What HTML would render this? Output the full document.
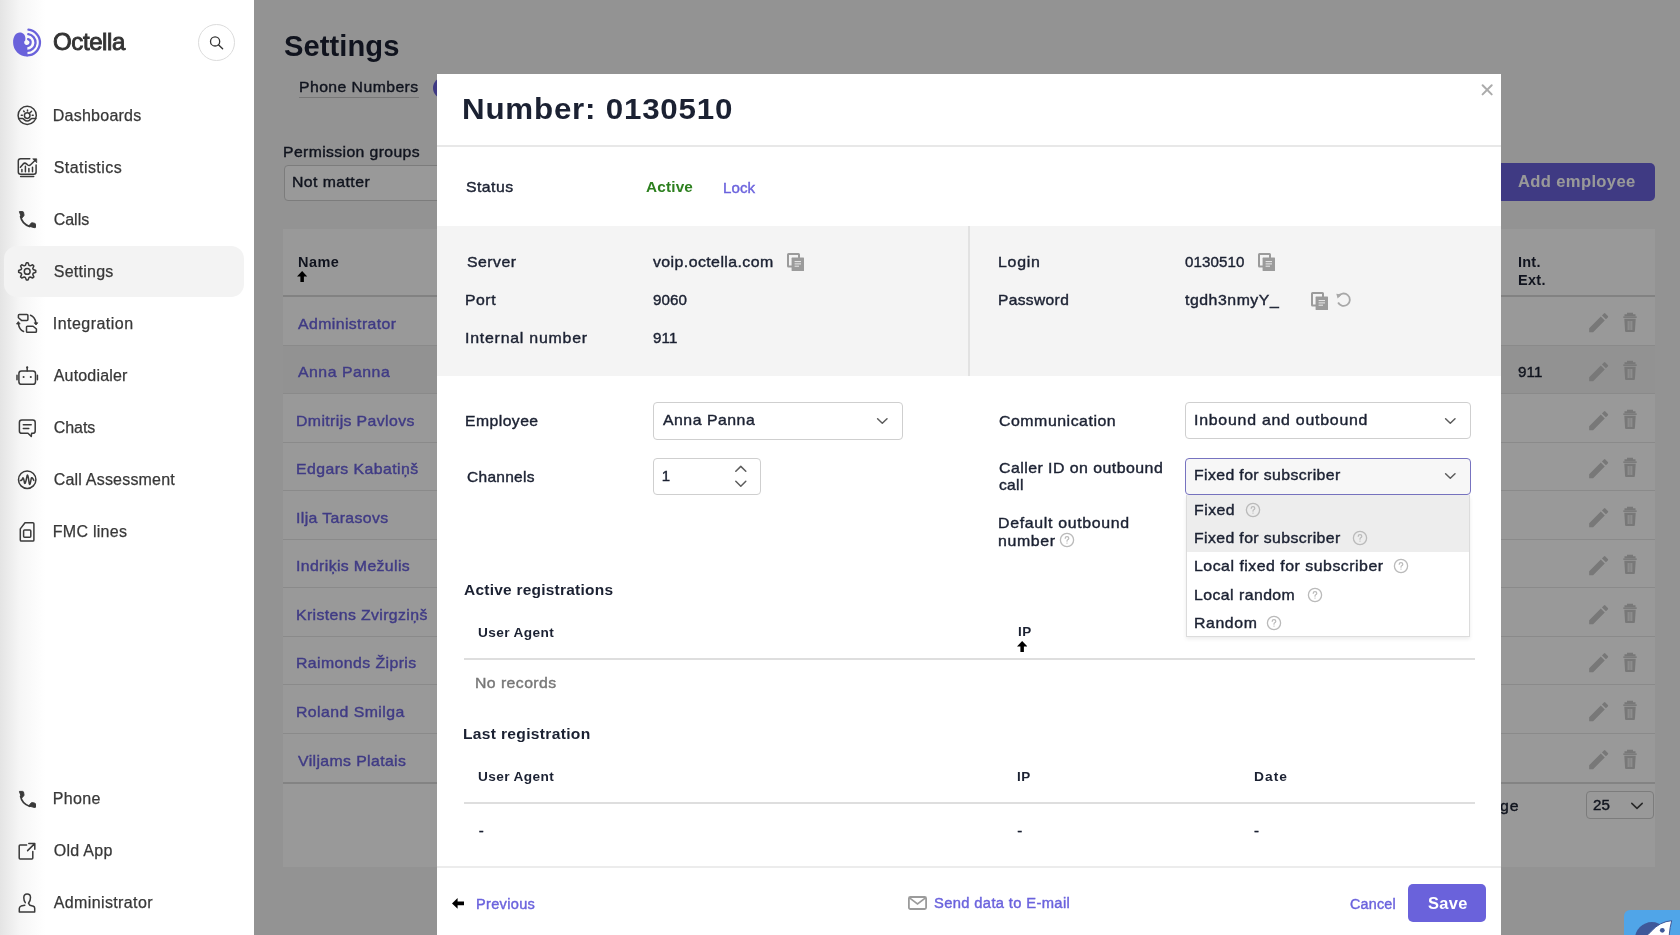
<!DOCTYPE html>
<html><head><meta charset="utf-8">
<style>
html,body{margin:0;padding:0;width:1680px;height:935px;overflow:hidden;background:#f5f5f5;font-family:"Liberation Sans",sans-serif;}
.t{position:absolute;white-space:nowrap;}
.b{position:absolute;box-sizing:border-box;display:block;}
.layer{position:absolute;left:0;top:0;width:1680px;height:935px;overflow:hidden;will-change:transform;}
</style></head><body>
<div class="layer" style="background:#f5f5f5"><div class="b" style="left:299px;top:97px;width:119.5px;height:1px;background:#c6c6c6"></div>
<div class="b" style="left:433px;top:77px;width:22px;height:22px;border-radius:50%;background:#6a62db"></div>
<div class="b" style="left:283.6px;top:164.9px;width:320px;height:36.5px;border:1px solid #cfcfcf;border-radius:4px;background:#fff"></div>
<div class="b" style="left:1480px;top:162.8px;width:174.5px;height:38px;border-radius:5px;background:#6a62db"></div>
<div class="b" style="left:282.7px;top:229.3px;width:1372.6px;height:638.1px;background:#fff"></div>
<div class="b" style="left:282.7px;top:294.5px;width:1372.6px;height:2px;background:#d9d9d9"></div>
<div class="b" style="left:282.7px;top:345.05px;width:1372.6px;height:48.55px;background:#f4f4f4"></div>
<div class="b" style="left:282.7px;top:344.55px;width:1372.6px;height:1px;background:#e6e6e6"></div>
<div class="b" style="left:282.7px;top:393.1px;width:1372.6px;height:1px;background:#e6e6e6"></div>
<div class="b" style="left:282.7px;top:441.65px;width:1372.6px;height:1px;background:#e6e6e6"></div>
<div class="b" style="left:282.7px;top:490.2px;width:1372.6px;height:1px;background:#e6e6e6"></div>
<div class="b" style="left:282.7px;top:538.75px;width:1372.6px;height:1px;background:#e6e6e6"></div>
<div class="b" style="left:282.7px;top:587.3px;width:1372.6px;height:1px;background:#e6e6e6"></div>
<div class="b" style="left:282.7px;top:635.8499999999999px;width:1372.6px;height:1px;background:#e6e6e6"></div>
<div class="b" style="left:282.7px;top:684.4px;width:1372.6px;height:1px;background:#e6e6e6"></div>
<div class="b" style="left:282.7px;top:732.95px;width:1372.6px;height:1px;background:#e6e6e6"></div>
<div class="b" style="left:282.7px;top:781.7px;width:1372.6px;height:2px;background:#dadada"></div>
<svg class="b" style="left:1585.5px;top:310.40px" width="25.3" height="25.3" viewBox="0 0 24 24"><path d="M3 17.25V21h3.75L17.81 9.94l-3.75-3.75L3 17.25zM20.71 7.04a1 1 0 0 0 0-1.41l-2.34-2.34a1 1 0 0 0-1.41 0l-1.83 1.83 3.75 3.75 1.83-1.83z" fill="#c8c8c8"/></svg>
<svg class="b" style="left:1620px;top:311.70px" width="20" height="21" viewBox="0 0 20 21"><path d="M4.5 3.2H15.5M8 3.2V1.8H12V3.2" stroke="#c8c8c8" stroke-width="2" fill="none"/><path d="M3.3 4.4H16.7V5.9H3.3Z" fill="#c8c8c8"/><path d="M4.3 6.8H15.7L14.9 19.3Q14.8 20.1 14 20.1H6Q5.2 20.1 5.1 19.3Z" fill="#c8c8c8"/><path d="M8.2 9V18M10 9V18M11.8 9V18" stroke="#fff" stroke-width="0.9"/></svg>
<svg class="b" style="left:1585.5px;top:358.95px" width="25.3" height="25.3" viewBox="0 0 24 24"><path d="M3 17.25V21h3.75L17.81 9.94l-3.75-3.75L3 17.25zM20.71 7.04a1 1 0 0 0 0-1.41l-2.34-2.34a1 1 0 0 0-1.41 0l-1.83 1.83 3.75 3.75 1.83-1.83z" fill="#c8c8c8"/></svg>
<svg class="b" style="left:1620px;top:360.25px" width="20" height="21" viewBox="0 0 20 21"><path d="M4.5 3.2H15.5M8 3.2V1.8H12V3.2" stroke="#c8c8c8" stroke-width="2" fill="none"/><path d="M3.3 4.4H16.7V5.9H3.3Z" fill="#c8c8c8"/><path d="M4.3 6.8H15.7L14.9 19.3Q14.8 20.1 14 20.1H6Q5.2 20.1 5.1 19.3Z" fill="#c8c8c8"/><path d="M8.2 9V18M10 9V18M11.8 9V18" stroke="#fff" stroke-width="0.9"/></svg>
<svg class="b" style="left:1585.5px;top:407.50px" width="25.3" height="25.3" viewBox="0 0 24 24"><path d="M3 17.25V21h3.75L17.81 9.94l-3.75-3.75L3 17.25zM20.71 7.04a1 1 0 0 0 0-1.41l-2.34-2.34a1 1 0 0 0-1.41 0l-1.83 1.83 3.75 3.75 1.83-1.83z" fill="#c8c8c8"/></svg>
<svg class="b" style="left:1620px;top:408.80px" width="20" height="21" viewBox="0 0 20 21"><path d="M4.5 3.2H15.5M8 3.2V1.8H12V3.2" stroke="#c8c8c8" stroke-width="2" fill="none"/><path d="M3.3 4.4H16.7V5.9H3.3Z" fill="#c8c8c8"/><path d="M4.3 6.8H15.7L14.9 19.3Q14.8 20.1 14 20.1H6Q5.2 20.1 5.1 19.3Z" fill="#c8c8c8"/><path d="M8.2 9V18M10 9V18M11.8 9V18" stroke="#fff" stroke-width="0.9"/></svg>
<svg class="b" style="left:1585.5px;top:456.05px" width="25.3" height="25.3" viewBox="0 0 24 24"><path d="M3 17.25V21h3.75L17.81 9.94l-3.75-3.75L3 17.25zM20.71 7.04a1 1 0 0 0 0-1.41l-2.34-2.34a1 1 0 0 0-1.41 0l-1.83 1.83 3.75 3.75 1.83-1.83z" fill="#c8c8c8"/></svg>
<svg class="b" style="left:1620px;top:457.35px" width="20" height="21" viewBox="0 0 20 21"><path d="M4.5 3.2H15.5M8 3.2V1.8H12V3.2" stroke="#c8c8c8" stroke-width="2" fill="none"/><path d="M3.3 4.4H16.7V5.9H3.3Z" fill="#c8c8c8"/><path d="M4.3 6.8H15.7L14.9 19.3Q14.8 20.1 14 20.1H6Q5.2 20.1 5.1 19.3Z" fill="#c8c8c8"/><path d="M8.2 9V18M10 9V18M11.8 9V18" stroke="#fff" stroke-width="0.9"/></svg>
<svg class="b" style="left:1585.5px;top:504.60px" width="25.3" height="25.3" viewBox="0 0 24 24"><path d="M3 17.25V21h3.75L17.81 9.94l-3.75-3.75L3 17.25zM20.71 7.04a1 1 0 0 0 0-1.41l-2.34-2.34a1 1 0 0 0-1.41 0l-1.83 1.83 3.75 3.75 1.83-1.83z" fill="#c8c8c8"/></svg>
<svg class="b" style="left:1620px;top:505.90px" width="20" height="21" viewBox="0 0 20 21"><path d="M4.5 3.2H15.5M8 3.2V1.8H12V3.2" stroke="#c8c8c8" stroke-width="2" fill="none"/><path d="M3.3 4.4H16.7V5.9H3.3Z" fill="#c8c8c8"/><path d="M4.3 6.8H15.7L14.9 19.3Q14.8 20.1 14 20.1H6Q5.2 20.1 5.1 19.3Z" fill="#c8c8c8"/><path d="M8.2 9V18M10 9V18M11.8 9V18" stroke="#fff" stroke-width="0.9"/></svg>
<svg class="b" style="left:1585.5px;top:553.15px" width="25.3" height="25.3" viewBox="0 0 24 24"><path d="M3 17.25V21h3.75L17.81 9.94l-3.75-3.75L3 17.25zM20.71 7.04a1 1 0 0 0 0-1.41l-2.34-2.34a1 1 0 0 0-1.41 0l-1.83 1.83 3.75 3.75 1.83-1.83z" fill="#c8c8c8"/></svg>
<svg class="b" style="left:1620px;top:554.45px" width="20" height="21" viewBox="0 0 20 21"><path d="M4.5 3.2H15.5M8 3.2V1.8H12V3.2" stroke="#c8c8c8" stroke-width="2" fill="none"/><path d="M3.3 4.4H16.7V5.9H3.3Z" fill="#c8c8c8"/><path d="M4.3 6.8H15.7L14.9 19.3Q14.8 20.1 14 20.1H6Q5.2 20.1 5.1 19.3Z" fill="#c8c8c8"/><path d="M8.2 9V18M10 9V18M11.8 9V18" stroke="#fff" stroke-width="0.9"/></svg>
<svg class="b" style="left:1585.5px;top:601.70px" width="25.3" height="25.3" viewBox="0 0 24 24"><path d="M3 17.25V21h3.75L17.81 9.94l-3.75-3.75L3 17.25zM20.71 7.04a1 1 0 0 0 0-1.41l-2.34-2.34a1 1 0 0 0-1.41 0l-1.83 1.83 3.75 3.75 1.83-1.83z" fill="#c8c8c8"/></svg>
<svg class="b" style="left:1620px;top:603.00px" width="20" height="21" viewBox="0 0 20 21"><path d="M4.5 3.2H15.5M8 3.2V1.8H12V3.2" stroke="#c8c8c8" stroke-width="2" fill="none"/><path d="M3.3 4.4H16.7V5.9H3.3Z" fill="#c8c8c8"/><path d="M4.3 6.8H15.7L14.9 19.3Q14.8 20.1 14 20.1H6Q5.2 20.1 5.1 19.3Z" fill="#c8c8c8"/><path d="M8.2 9V18M10 9V18M11.8 9V18" stroke="#fff" stroke-width="0.9"/></svg>
<svg class="b" style="left:1585.5px;top:650.25px" width="25.3" height="25.3" viewBox="0 0 24 24"><path d="M3 17.25V21h3.75L17.81 9.94l-3.75-3.75L3 17.25zM20.71 7.04a1 1 0 0 0 0-1.41l-2.34-2.34a1 1 0 0 0-1.41 0l-1.83 1.83 3.75 3.75 1.83-1.83z" fill="#c8c8c8"/></svg>
<svg class="b" style="left:1620px;top:651.55px" width="20" height="21" viewBox="0 0 20 21"><path d="M4.5 3.2H15.5M8 3.2V1.8H12V3.2" stroke="#c8c8c8" stroke-width="2" fill="none"/><path d="M3.3 4.4H16.7V5.9H3.3Z" fill="#c8c8c8"/><path d="M4.3 6.8H15.7L14.9 19.3Q14.8 20.1 14 20.1H6Q5.2 20.1 5.1 19.3Z" fill="#c8c8c8"/><path d="M8.2 9V18M10 9V18M11.8 9V18" stroke="#fff" stroke-width="0.9"/></svg>
<svg class="b" style="left:1585.5px;top:698.80px" width="25.3" height="25.3" viewBox="0 0 24 24"><path d="M3 17.25V21h3.75L17.81 9.94l-3.75-3.75L3 17.25zM20.71 7.04a1 1 0 0 0 0-1.41l-2.34-2.34a1 1 0 0 0-1.41 0l-1.83 1.83 3.75 3.75 1.83-1.83z" fill="#c8c8c8"/></svg>
<svg class="b" style="left:1620px;top:700.10px" width="20" height="21" viewBox="0 0 20 21"><path d="M4.5 3.2H15.5M8 3.2V1.8H12V3.2" stroke="#c8c8c8" stroke-width="2" fill="none"/><path d="M3.3 4.4H16.7V5.9H3.3Z" fill="#c8c8c8"/><path d="M4.3 6.8H15.7L14.9 19.3Q14.8 20.1 14 20.1H6Q5.2 20.1 5.1 19.3Z" fill="#c8c8c8"/><path d="M8.2 9V18M10 9V18M11.8 9V18" stroke="#fff" stroke-width="0.9"/></svg>
<svg class="b" style="left:1585.5px;top:747.35px" width="25.3" height="25.3" viewBox="0 0 24 24"><path d="M3 17.25V21h3.75L17.81 9.94l-3.75-3.75L3 17.25zM20.71 7.04a1 1 0 0 0 0-1.41l-2.34-2.34a1 1 0 0 0-1.41 0l-1.83 1.83 3.75 3.75 1.83-1.83z" fill="#c8c8c8"/></svg>
<svg class="b" style="left:1620px;top:748.65px" width="20" height="21" viewBox="0 0 20 21"><path d="M4.5 3.2H15.5M8 3.2V1.8H12V3.2" stroke="#c8c8c8" stroke-width="2" fill="none"/><path d="M3.3 4.4H16.7V5.9H3.3Z" fill="#c8c8c8"/><path d="M4.3 6.8H15.7L14.9 19.3Q14.8 20.1 14 20.1H6Q5.2 20.1 5.1 19.3Z" fill="#c8c8c8"/><path d="M8.2 9V18M10 9V18M11.8 9V18" stroke="#fff" stroke-width="0.9"/></svg>
<svg class="b" style="left:297px;top:270.8px" width="10.3" height="11.6" viewBox="0 0 10.3 11.6"><path d="M5.15 0L10.3 5.5H6.9V11.6H3.4V5.5H0Z" fill="#000"/></svg>
<div class="b" style="left:1586px;top:791.2px;width:68.4px;height:28.2px;border:1px solid #cfcfcf;border-radius:4px;background:#fff"></div>
<svg class="b" style="left:1630px;top:800px;" width="16" height="12" viewBox="1630 800 16 12"><path d="M1631.8 803.3L1637 808.3L1642.2 803.3" stroke="#444" stroke-width="1.6" fill="none" stroke-linecap="round" stroke-linejoin="round"/></svg>
<div class="t" style="left:283.60px;top:31.50px;font-size:29px;line-height:29px;font-weight:700;color:#1b2132;letter-spacing:0.073px;transform:scaleX(1.0045);transform-origin:0 0;">Settings</div>
<div class="t" style="left:298.75px;top:79.10px;font-size:15px;line-height:15px;font-weight:400;color:#1b2132;letter-spacing:0.425px;-webkit-text-stroke:0.4px #1b2132;transform:scaleX(1.0501);transform-origin:0 0;">Phone Numbers</div>
<div class="t" style="left:282.55px;top:144.10px;font-size:15px;line-height:15px;font-weight:400;color:#1b2132;letter-spacing:0.366px;-webkit-text-stroke:0.4px #1b2132;transform:scaleX(1.0500);transform-origin:0 0;">Permission groups</div>
<div class="t" style="left:291.94px;top:174.20px;font-size:15px;line-height:15px;font-weight:400;color:#1b2132;letter-spacing:0.400px;-webkit-text-stroke:0.4px #1b2132;transform:scaleX(1.0550);transform-origin:0 0;">Not matter</div>
<div class="t" style="left:1518.20px;top:174.40px;font-size:16px;line-height:16px;font-weight:700;color:#fff;letter-spacing:0.344px;transform:scaleX(1.0358);transform-origin:0 0;">Add employee</div>
<div class="t" style="left:297.80px;top:254.60px;font-size:14px;line-height:14px;font-weight:700;color:#1b2132;letter-spacing:0.428px;transform:scaleX(1.0346);transform-origin:0 0;">Name</div>
<div class="t" style="left:1518.00px;top:254.80px;font-size:14px;line-height:14px;font-weight:700;color:#1b2132;letter-spacing:0.227px;transform:scaleX(1.0350);transform-origin:0 0;">Int.</div>
<div class="t" style="left:1518.00px;top:273.00px;font-size:14px;line-height:14px;font-weight:700;color:#1b2132;letter-spacing:0.279px;transform:scaleX(1.0350);transform-origin:0 0;">Ext.</div>
<div class="t" style="left:297.50px;top:315.60px;font-size:15px;line-height:15px;font-weight:400;color:#6b63dd;letter-spacing:0.384px;-webkit-text-stroke:0.4px #6b63dd;transform:scaleX(1.0550);transform-origin:0 0;">Administrator</div>
<div class="t" style="left:297.50px;top:364.15px;font-size:15px;line-height:15px;font-weight:400;color:#6b63dd;letter-spacing:0.482px;-webkit-text-stroke:0.4px #6b63dd;transform:scaleX(1.0550);transform-origin:0 0;">Anna Panna</div>
<div class="t" style="left:296.44px;top:412.70px;font-size:15px;line-height:15px;font-weight:400;color:#6b63dd;letter-spacing:0.366px;-webkit-text-stroke:0.4px #6b63dd;transform:scaleX(1.0550);transform-origin:0 0;">Dmitrijs Pavlovs</div>
<div class="t" style="left:296.44px;top:461.25px;font-size:15px;line-height:15px;font-weight:400;color:#6b63dd;letter-spacing:0.404px;-webkit-text-stroke:0.4px #6b63dd;transform:scaleX(1.0550);transform-origin:0 0;">Edgars Kabatiņš</div>
<div class="t" style="left:296.44px;top:509.80px;font-size:15px;line-height:15px;font-weight:400;color:#6b63dd;letter-spacing:0.356px;-webkit-text-stroke:0.4px #6b63dd;transform:scaleX(1.0550);transform-origin:0 0;">Ilja Tarasovs</div>
<div class="t" style="left:296.44px;top:558.35px;font-size:15px;line-height:15px;font-weight:400;color:#6b63dd;letter-spacing:0.351px;-webkit-text-stroke:0.4px #6b63dd;transform:scaleX(1.0550);transform-origin:0 0;">Indriķis Mežulis</div>
<div class="t" style="left:296.44px;top:606.90px;font-size:15px;line-height:15px;font-weight:400;color:#6b63dd;letter-spacing:0.358px;-webkit-text-stroke:0.4px #6b63dd;transform:scaleX(1.0550);transform-origin:0 0;">Kristens Zvirgziņš</div>
<div class="t" style="left:296.44px;top:655.45px;font-size:15px;line-height:15px;font-weight:400;color:#6b63dd;letter-spacing:0.398px;-webkit-text-stroke:0.4px #6b63dd;transform:scaleX(1.0550);transform-origin:0 0;">Raimonds Žipris</div>
<div class="t" style="left:296.44px;top:704.00px;font-size:15px;line-height:15px;font-weight:400;color:#6b63dd;letter-spacing:0.422px;-webkit-text-stroke:0.4px #6b63dd;transform:scaleX(1.0550);transform-origin:0 0;">Roland Smilga</div>
<div class="t" style="left:297.50px;top:752.55px;font-size:15px;line-height:15px;font-weight:400;color:#6b63dd;letter-spacing:0.360px;-webkit-text-stroke:0.4px #6b63dd;transform:scaleX(1.0550);transform-origin:0 0;">Viljams Platais</div>
<div class="t" style="left:1518.00px;top:363.70px;font-size:15px;line-height:15px;font-weight:400;color:#1b2132;letter-spacing:0.117px;-webkit-text-stroke:0.4px #1b2132;transform:scaleX(1.0100);transform-origin:0 0;">911</div>
<div class="t" style="left:1500.00px;top:798.00px;font-size:15px;line-height:15px;font-weight:400;color:#1b2132;letter-spacing:0.852px;-webkit-text-stroke:0.4px #1b2132;transform:scaleX(1.0550);transform-origin:0 0;">ge</div>
<div class="t" style="left:1593.00px;top:797.00px;font-size:15px;line-height:15px;font-weight:400;color:#1b2132;letter-spacing:0.162px;-webkit-text-stroke:0.4px #1b2132;transform:scaleX(1.0100);transform-origin:0 0;">25</div></div>
<div class="layer" style="background:rgba(0,0,0,0.4)"></div>
<div class="layer" style="width:254px;background:linear-gradient(to right,#e4e4e4 0px,#f6f6f6 20px,#fff 45px)"><div class="b" style="left:3.85px;top:246.4px;width:240.6px;height:51px;border-radius:13px;background:#f3f3f3"></div>
<svg class="b" style="left:10px;top:26px;" width="34" height="34" viewBox="10 26 34 34"><path d="M27.1 56.5A14 14 0 0 1 13.1 42.5C13.1 36.5 15.8 32.5 19.8 32.5C23.2 32.5 25.5 35 25.4 38.6L25.2 40.6A2.4 2.4 0 0 0 27.2 44.9L27.6 56.5Z" fill="#6a62db"/><path d="M28.44 29.72A12.85 12.85 0 0 1 27.10 55.35" stroke="#6a62db" stroke-width="2.3" fill="none" stroke-linecap="round"/><path d="M28.28 34.13A8.45 8.45 0 0 1 27.10 50.95" stroke="#6a62db" stroke-width="2.3" fill="none" stroke-linecap="round"/><path d="M28.02 39.07A3.55 3.55 0 0 1 27.10 46.05" stroke="#6a62db" stroke-width="2.2" fill="none" stroke-linecap="round"/></svg>
<div class="b" style="left:197.6px;top:24px;width:37px;height:37px;border-radius:50%;border:1px solid #dcdcdc;background:#fff"></div>
<svg class="b" style="left:205px;top:30px;" width="24" height="24" viewBox="205 30 24 24"><circle cx="215.1" cy="41.4" r="4.6" stroke="#333" stroke-width="1.3" fill="none"/><path d="M218.4 44.7L222.6 48.7" stroke="#333" stroke-width="1.4" stroke-linecap="round"/></svg>
<svg class="b" style="left:14px;top:102px;" width="27" height="27" viewBox="14 102 27 27"><circle cx="27.2" cy="115.4" r="9.1" stroke="#3a3a3a" stroke-width="1.5" fill="none" stroke-linecap="round" stroke-linejoin="round"/><circle cx="27.2" cy="115.6" r="2.8" stroke="#3a3a3a" stroke-width="1.5" fill="none" stroke-linecap="round" stroke-linejoin="round"/><path d="M29.2 113.5L31.6 111.2M21.3 115.2H22.3M32.2 115.2H33.2M27.5 110V110.9M23.6 111L24.2 111.6" stroke="#3a3a3a" stroke-width="1.5" fill="none" stroke-linecap="round" stroke-linejoin="round"/><path d="M18.6 118.6H22.3C24 118.6 24.5 121 27.2 121C29.9 121 30.4 118.6 32.1 118.6H35.8" stroke="#3a3a3a" stroke-width="1.5" fill="none" stroke-linecap="round" stroke-linejoin="round"/></svg>
<svg class="b" style="left:14px;top:154px;" width="27" height="27" viewBox="14 154 27 27"><path d="M29.8 158.7H20.6Q18.3 158.7 18.3 161V172Q18.3 174.2 20.6 174.2H33.9Q36.1 174.2 36.1 172V164.9" stroke="#3a3a3a" stroke-width="1.5" fill="none" stroke-linecap="round" stroke-linejoin="round"/><path d="M20.6 176.5H33.7" stroke="#3a3a3a" stroke-width="1.5" fill="none" stroke-linecap="round" stroke-linejoin="round"/><path d="M20.4 167.3L23.2 163.9Q24.8 162.4 26.5 163.9L27.8 165Q29.3 166 30.6 164.7L35.2 160.3" stroke="#3a3a3a" stroke-width="1.5" fill="none" stroke-linecap="round" stroke-linejoin="round"/><path d="M32.7 158.8H36.7V162.8Z" fill="#3a3a3a" stroke="#3a3a3a" stroke-width="0.7" stroke-linejoin="round"/><path d="M21.9 169.5V171.7M25.4 166.3V171.7M28.9 168.4V171.7M32.5 167.2V171.7" stroke="#3a3a3a" stroke-width="1.5" fill="none" stroke-linecap="round" stroke-linejoin="round"/></svg>
<svg class="b" style="left:14px;top:206px;" width="27" height="27" viewBox="14 206 27 27"><path d="M19.4 211.6H22.6Q23.3 211.6 23.5 212.3L24 214.9Q24.1 215.6 23.6 216.1L21.7 218.2Z" transform="translate(0 0)" fill="#3a3a3a" stroke="#3a3a3a" stroke-width="1" stroke-linejoin="round"/><path d="M20.6 216.5Q21.8 223.5 29.5 226.5" transform="translate(0 0)" stroke="#3a3a3a" stroke-width="1.7" fill="none" stroke-linecap="round"/><path d="M28.7 226.2L31.2 223.1Q31.7 222.6 32.4 222.8L34.8 223.4Q35.5 223.6 35.5 224.3V227.2Q35.5 227.8 34.8 227.7Z" transform="translate(0 0)" fill="#3a3a3a" stroke="#3a3a3a" stroke-width="1" stroke-linejoin="round"/></svg>
<svg class="b" style="left:14px;top:786px;" width="27" height="27" viewBox="14 786 27 27"><path d="M19.4 211.6H22.6Q23.3 211.6 23.5 212.3L24 214.9Q24.1 215.6 23.6 216.1L21.7 218.2Z" transform="translate(0 579.8)" fill="#3a3a3a" stroke="#3a3a3a" stroke-width="1" stroke-linejoin="round"/><path d="M20.6 216.5Q21.8 223.5 29.5 226.5" transform="translate(0 579.8)" stroke="#3a3a3a" stroke-width="1.7" fill="none" stroke-linecap="round"/><path d="M28.7 226.2L31.2 223.1Q31.7 222.6 32.4 222.8L34.8 223.4Q35.5 223.6 35.5 224.3V227.2Q35.5 227.8 34.8 227.7Z" transform="translate(0 579.8)" fill="#3a3a3a" stroke="#3a3a3a" stroke-width="1" stroke-linejoin="round"/></svg>
<svg class="b" style="left:14px;top:258px;" width="27" height="27" viewBox="14 258 27 27"><path d="M26.36 262.84 L28.04 262.84 L29.03 265.37 L30.17 265.84 L32.66 264.75 L33.85 265.94 L32.76 268.43 L33.23 269.57 L35.76 270.56 L35.76 272.24 L33.23 273.23 L32.76 274.37 L33.85 276.86 L32.66 278.05 L30.17 276.96 L29.03 277.43 L28.04 279.96 L26.36 279.96 L25.37 277.43 L24.23 276.96 L21.74 278.05 L20.55 276.86 L21.64 274.37 L21.17 273.23 L18.64 272.24 L18.64 270.56 L21.17 269.57 L21.64 268.43 L20.55 265.94 L21.74 264.75 L24.23 265.84 L25.37 265.37Z" stroke="#3a3a3a" stroke-width="1.5" fill="none" stroke-linecap="round" stroke-linejoin="round"/><circle cx="27.2" cy="271.4" r="2.9" stroke="#3a3a3a" stroke-width="1.5" fill="none" stroke-linecap="round" stroke-linejoin="round"/></svg>
<svg class="b" style="left:14px;top:310px;" width="27" height="27" viewBox="14 310 27 27"><path d="M19.3 314.5H27Q27.9 314.5 27.9 315.4V319.5Q27.9 320.4 27 320.4H21.5L18.4 317.8V315.4Q18.4 314.5 19.3 314.5Z" stroke="#3a3a3a" stroke-width="1.5" fill="none" stroke-linecap="round" stroke-linejoin="round"/><path d="M35.6 332.3H27.4Q26.5 332.3 26.5 331.4V327.1Q26.5 326.2 27.4 326.2H33.1L36.4 329V331.4Q36.4 332.3 35.5 332.3Z" stroke="#3a3a3a" stroke-width="1.5" fill="none" stroke-linecap="round" stroke-linejoin="round"/><path d="M30.5 315.3Q35 317 35.9 322.8" stroke="#3a3a3a" stroke-width="1.5" fill="none" stroke-linecap="round" stroke-linejoin="round"/><path d="M34.2 322.8H37.8L36 325Z" fill="#3a3a3a" stroke="#3a3a3a" stroke-width="0.8" stroke-linejoin="round"/><path d="M23.6 331.5Q19.2 329.6 18.4 323.9" stroke="#3a3a3a" stroke-width="1.5" fill="none" stroke-linecap="round" stroke-linejoin="round"/><path d="M16.5 324H20.2L18.3 321.6Z" fill="#3a3a3a" stroke="#3a3a3a" stroke-width="0.8" stroke-linejoin="round"/></svg>
<svg class="b" style="left:14px;top:362px;" width="27" height="27" viewBox="14 362 27 27"><rect x="18.9" y="371" width="16.6" height="13.3" rx="2.6" stroke="#3a3a3a" stroke-width="1.5" fill="none" stroke-linecap="round" stroke-linejoin="round"/><path d="M27.2 367.4V371" stroke="#3a3a3a" stroke-width="1.5" fill="none" stroke-linecap="round" stroke-linejoin="round"/><circle cx="27.2" cy="367.4" r="1.1" fill="#3a3a3a"/><circle cx="23.6" cy="377" r="1.05" fill="#3a3a3a"/><circle cx="30.8" cy="377" r="1.05" fill="#3a3a3a"/><path d="M17 375.3V379.7M37.4 375.3V379.7" stroke="#3a3a3a" stroke-width="1.5" fill="none" stroke-linecap="round" stroke-linejoin="round"/></svg>
<svg class="b" style="left:14px;top:414px;" width="27" height="27" viewBox="14 414 27 27"><path d="M21.8 420H32.8Q35.2 420 35.2 422.4V430.9Q35.2 433.3 32.8 433.3H31.6L31.3 436.5L28 433.3H21.8Q19.4 433.3 19.4 430.9V422.4Q19.4 420 21.8 420Z" stroke="#3a3a3a" stroke-width="1.5" fill="none" stroke-linecap="round" stroke-linejoin="round"/><path d="M23.3 424.8H31.2M23.3 428.5H28.8" stroke="#3a3a3a" stroke-width="1.5" fill="none" stroke-linecap="round" stroke-linejoin="round"/></svg>
<svg class="b" style="left:14px;top:466px;" width="27" height="27" viewBox="14 466 27 27"><circle cx="27.2" cy="479.7" r="8.7" stroke="#3a3a3a" stroke-width="1.5" fill="none" stroke-linecap="round" stroke-linejoin="round"/><path d="M20.4 480.4Q22 480.6 22.7 478.2Q23.4 476.5 24.5 482.8Q25.2 485.6 27.1 475.6Q27.8 472.8 29.3 483.8Q30 486.3 31.3 478.2Q32 476.4 33.8 480.4" stroke="#3a3a3a" stroke-width="1.5" fill="none" stroke-linecap="round" stroke-linejoin="round"/></svg>
<svg class="b" style="left:14px;top:518px;" width="27" height="27" viewBox="14 518 27 27"><path d="M25 522.7H32.8Q33.9 522.7 33.9 523.8V539.9Q33.9 541 32.8 541H21.4Q20.3 541 20.3 539.9V528.9Z" stroke="#3a3a3a" stroke-width="1.5" fill="none" stroke-linecap="round" stroke-linejoin="round"/><rect x="23.6" y="530.1" width="7.2" height="7.1" rx="1" stroke="#3a3a3a" stroke-width="1.5" fill="none" stroke-linecap="round" stroke-linejoin="round"/></svg>
<svg class="b" style="left:14px;top:838px;" width="27" height="27" viewBox="14 838 27 27"><path d="M26.6 845.1H20.1Q19.2 845.1 19.2 846V858.1Q19.2 859 20.1 859H31.9Q32.8 859 32.8 858.1V851.6" stroke="#3a3a3a" stroke-width="1.5" fill="none" stroke-linecap="round" stroke-linejoin="round"/><path d="M27.6 850.6L34.7 843.6M28.8 843.5H34.8V849.2" stroke="#3a3a3a" stroke-width="1.5" fill="none" stroke-linecap="round" stroke-linejoin="round"/></svg>
<svg class="b" style="left:14px;top:890px;" width="27" height="27" viewBox="14 890 27 27"><path d="M25.3 902.6Q23.8 900.5 23.8 897.7Q23.8 893.9 27.1 893.9Q30.5 893.9 30.5 897.5Q30.5 900.9 28.5 903.3L29.9 905.2L33.4 906.2Q34.7 906.8 34.7 908.3V912H19.3V908.5Q19.3 906.7 21 906.1L24.8 905.2" stroke="#3a3a3a" stroke-width="1.5" fill="none" stroke-linecap="round" stroke-linejoin="round"/></svg>
<div class="t" style="left:53.00px;top:29.80px;font-size:24px;line-height:24px;font-weight:400;color:#333;letter-spacing:-0.391px;-webkit-text-stroke:0.9px #333;">Octella</div>
<div class="t" style="left:52.75px;top:107.80px;font-size:16px;line-height:16px;font-weight:400;color:#383838;letter-spacing:0.247px;-webkit-text-stroke:0.25px #383838;">Dashboards</div>
<div class="t" style="left:53.75px;top:159.80px;font-size:16px;line-height:16px;font-weight:400;color:#383838;letter-spacing:0.432px;-webkit-text-stroke:0.25px #383838;">Statistics</div>
<div class="t" style="left:53.75px;top:211.80px;font-size:16px;line-height:16px;font-weight:400;color:#383838;letter-spacing:-0.041px;-webkit-text-stroke:0.25px #383838;">Calls</div>
<div class="t" style="left:53.75px;top:263.80px;font-size:16px;line-height:16px;font-weight:400;color:#383838;letter-spacing:0.248px;-webkit-text-stroke:0.25px #383838;">Settings</div>
<div class="t" style="left:52.75px;top:315.80px;font-size:16px;line-height:16px;font-weight:400;color:#383838;letter-spacing:0.469px;-webkit-text-stroke:0.25px #383838;">Integration</div>
<div class="t" style="left:53.75px;top:367.80px;font-size:16px;line-height:16px;font-weight:400;color:#383838;letter-spacing:0.176px;-webkit-text-stroke:0.25px #383838;">Autodialer</div>
<div class="t" style="left:53.75px;top:419.80px;font-size:16px;line-height:16px;font-weight:400;color:#383838;letter-spacing:-0.049px;-webkit-text-stroke:0.25px #383838;">Chats</div>
<div class="t" style="left:53.75px;top:471.80px;font-size:16px;line-height:16px;font-weight:400;color:#383838;letter-spacing:0.193px;-webkit-text-stroke:0.25px #383838;">Call Assessment</div>
<div class="t" style="left:52.75px;top:523.80px;font-size:16px;line-height:16px;font-weight:400;color:#383838;letter-spacing:0.266px;-webkit-text-stroke:0.25px #383838;">FMC lines</div>
<div class="t" style="left:52.75px;top:791.40px;font-size:16px;line-height:16px;font-weight:400;color:#383838;letter-spacing:0.340px;-webkit-text-stroke:0.25px #383838;">Phone</div>
<div class="t" style="left:53.75px;top:843.40px;font-size:16px;line-height:16px;font-weight:400;color:#383838;letter-spacing:0.290px;-webkit-text-stroke:0.25px #383838;">Old App</div>
<div class="t" style="left:53.75px;top:895.40px;font-size:16px;line-height:16px;font-weight:400;color:#383838;letter-spacing:0.373px;-webkit-text-stroke:0.25px #383838;">Administrator</div></div>
<div class="layer"><div class="b" style="left:437.2px;top:74.2px;width:1064.3px;height:870px;background:#fff"></div>
<div class="b" style="left:437.2px;top:145.3px;width:1064.3px;height:1.6px;background:#e8e8e8"></div>
<svg class="b" style="left:1478px;top:81px;" width="18" height="18" viewBox="1478 81 18 18"><path d="M1482.6 85.3L1491.7 94.4M1491.7 85.3L1482.6 94.4" stroke="#ababab" stroke-width="2" stroke-linecap="round"/></svg>
<div class="b" style="left:437.2px;top:226px;width:1064.3px;height:150px;background:#f4f4f4"></div>
<div class="b" style="left:968px;top:226px;width:1.5px;height:150px;background:#e2e2e2"></div>
<svg class="b" style="left:787.2px;top:252.9px" width="17" height="18" viewBox="0 0 17 18"><rect x="1" y="1" width="11" height="12.4" rx="0.5" stroke="#9b9b9b" stroke-width="2" fill="none"/><rect x="4.6" y="4.6" width="12.4" height="13.4" rx="0.6" fill="#9b9b9b"/><path d="M7.6 8.6H14M7.6 10.9H14M7.6 13.2H12" stroke="#f4f4f4" stroke-width="0.9"/></svg>
<svg class="b" style="left:1258.1px;top:253.1px" width="17" height="18" viewBox="0 0 17 18"><rect x="1" y="1" width="11" height="12.4" rx="0.5" stroke="#9b9b9b" stroke-width="2" fill="none"/><rect x="4.6" y="4.6" width="12.4" height="13.4" rx="0.6" fill="#9b9b9b"/><path d="M7.6 8.6H14M7.6 10.9H14M7.6 13.2H12" stroke="#f4f4f4" stroke-width="0.9"/></svg>
<svg class="b" style="left:1311px;top:291.9px" width="17" height="18" viewBox="0 0 17 18"><rect x="1" y="1" width="11" height="12.4" rx="0.5" stroke="#9b9b9b" stroke-width="2" fill="none"/><rect x="4.6" y="4.6" width="12.4" height="13.4" rx="0.6" fill="#9b9b9b"/><path d="M7.6 8.6H14M7.6 10.9H14M7.6 13.2H12" stroke="#f4f4f4" stroke-width="0.9"/></svg>
<svg class="b" style="left:1335px;top:291px" width="18" height="18" viewBox="0 0 18 18"><path d="M3.3 5.6A6.2 6.2 0 1 1 3.1 11.5" stroke="#a8a8a8" stroke-width="1.8" fill="none"/><path d="M1.3 2.8L6.8 3.4L2.6 7.5Z" fill="#a8a8a8"/></svg>
<div class="b" style="left:653.2px;top:402.2px;width:250px;height:37.4px;border:1px solid #cfcfcf;border-radius:4px;background:#fff"></div>
<svg class="b" style="left:875.2px;top:415.5px" width="15" height="11" viewBox="0 0 15 11"><path d="M2.6 2.7L7.3 7.2L12 2.7" stroke="#5c5c5c" stroke-width="1.5" fill="none" stroke-linecap="round" stroke-linejoin="round"/></svg>
<div class="b" style="left:653.2px;top:457.8px;width:107.6px;height:37px;border:1px solid #cfcfcf;border-radius:4px;background:#fff"></div>
<svg class="b" style="left:733px;top:463px" width="16" height="27" viewBox="0 0 16 27"><path d="M2.8 8.3L7.8 3.4L12.8 8.3M2.8 18.3L7.8 23.2L12.8 18.3" stroke="#5c5c5c" stroke-width="1.5" fill="none" stroke-linecap="round" stroke-linejoin="round"/></svg>
<div class="b" style="left:1185.3px;top:402.3px;width:285.3px;height:36.8px;border:1px solid #cfcfcf;border-radius:4px;background:#fff"></div>
<svg class="b" style="left:1443.2px;top:415.5px" width="15" height="11" viewBox="0 0 15 11"><path d="M2.6 2.7L7.3 7.2L12 2.7" stroke="#5c5c5c" stroke-width="1.5" fill="none" stroke-linecap="round" stroke-linejoin="round"/></svg>
<div class="b" style="left:1185.3px;top:458px;width:285.3px;height:36.5px;border:1.5px solid #7773c0;border-radius:4px;background:#f7f7f7"></div>
<svg class="b" style="left:1443.2px;top:471.3px" width="15" height="11" viewBox="0 0 15 11"><path d="M2.6 2.7L7.3 7.2L12 2.7" stroke="#5c5c5c" stroke-width="1.5" fill="none" stroke-linecap="round" stroke-linejoin="round"/></svg>
<div class="b" style="left:1185.5px;top:494.5px;width:284.5px;height:142.6px;background:#fff;border:1px solid #dcdcdc;border-top:none;box-shadow:0 2px 4px rgba(0,0,0,0.08)"></div>
<div class="b" style="left:1186.5px;top:494.5px;width:282.5px;height:57.2px;background:#ededed"></div>
<svg class="b" style="left:1059.3px;top:531.5px" width="16" height="16" viewBox="0 0 16 16"><circle cx="8" cy="8" r="6.6" stroke="#bababa" stroke-width="1.3" fill="none"/><path d="M6.2 6.3Q6.2 4.6 8 4.6Q9.8 4.6 9.8 6.2Q9.8 7.2 8.7 7.7Q8 8 8 9.2" stroke="#bababa" stroke-width="1.2" fill="none" stroke-linecap="round"/><circle cx="8" cy="11.1" r="0.7" fill="#bababa"/></svg>
<svg class="b" style="left:1244.5px;top:501.6px" width="16" height="16" viewBox="0 0 16 16"><circle cx="8" cy="8" r="6.6" stroke="#bababa" stroke-width="1.3" fill="none"/><path d="M6.2 6.3Q6.2 4.6 8 4.6Q9.8 4.6 9.8 6.2Q9.8 7.2 8.7 7.7Q8 8 8 9.2" stroke="#bababa" stroke-width="1.2" fill="none" stroke-linecap="round"/><circle cx="8" cy="11.1" r="0.7" fill="#bababa"/></svg>
<svg class="b" style="left:1351.7px;top:529.9px" width="16" height="16" viewBox="0 0 16 16"><circle cx="8" cy="8" r="6.6" stroke="#bababa" stroke-width="1.3" fill="none"/><path d="M6.2 6.3Q6.2 4.6 8 4.6Q9.8 4.6 9.8 6.2Q9.8 7.2 8.7 7.7Q8 8 8 9.2" stroke="#bababa" stroke-width="1.2" fill="none" stroke-linecap="round"/><circle cx="8" cy="11.1" r="0.7" fill="#bababa"/></svg>
<svg class="b" style="left:1392.5px;top:558.2px" width="16" height="16" viewBox="0 0 16 16"><circle cx="8" cy="8" r="6.6" stroke="#bababa" stroke-width="1.3" fill="none"/><path d="M6.2 6.3Q6.2 4.6 8 4.6Q9.8 4.6 9.8 6.2Q9.8 7.2 8.7 7.7Q8 8 8 9.2" stroke="#bababa" stroke-width="1.2" fill="none" stroke-linecap="round"/><circle cx="8" cy="11.1" r="0.7" fill="#bababa"/></svg>
<svg class="b" style="left:1306.6px;top:586.8px" width="16" height="16" viewBox="0 0 16 16"><circle cx="8" cy="8" r="6.6" stroke="#bababa" stroke-width="1.3" fill="none"/><path d="M6.2 6.3Q6.2 4.6 8 4.6Q9.8 4.6 9.8 6.2Q9.8 7.2 8.7 7.7Q8 8 8 9.2" stroke="#bababa" stroke-width="1.2" fill="none" stroke-linecap="round"/><circle cx="8" cy="11.1" r="0.7" fill="#bababa"/></svg>
<svg class="b" style="left:1266.3px;top:615.2px" width="16" height="16" viewBox="0 0 16 16"><circle cx="8" cy="8" r="6.6" stroke="#bababa" stroke-width="1.3" fill="none"/><path d="M6.2 6.3Q6.2 4.6 8 4.6Q9.8 4.6 9.8 6.2Q9.8 7.2 8.7 7.7Q8 8 8 9.2" stroke="#bababa" stroke-width="1.2" fill="none" stroke-linecap="round"/><circle cx="8" cy="11.1" r="0.7" fill="#bababa"/></svg>
<div class="b" style="left:464px;top:657.5px;width:1011px;height:2px;background:#dedede"></div>
<div class="b" style="left:464px;top:801.5px;width:1011px;height:2px;background:#dedede"></div>
<svg class="b" style="left:1016.8px;top:640.9px" width="10.3" height="11.4" viewBox="0 0 10.3 11.4"><path d="M5.15 0L10.3 5.4H6.9V11.4H3.4V5.4H0Z" fill="#000"/></svg>
<div class="b" style="left:437.2px;top:866.3px;width:1064.3px;height:1.6px;background:#ececec"></div>
<svg class="b" style="left:451.6px;top:897.8px" width="12" height="10.8" viewBox="0 0 12 10.8"><path d="M0 5.4L5.6 0V3.6H12V7.2H5.6V10.8Z" fill="#000"/></svg>
<svg class="b" style="left:907px;top:895px" width="21" height="16" viewBox="0 0 21 16"><rect x="1.9" y="2" width="17.2" height="12" rx="1.5" stroke="#9b9b9b" stroke-width="1.8" fill="none"/><path d="M2.5 2.8L10.5 9L18.5 2.8" stroke="#9b9b9b" stroke-width="1.6" fill="none"/></svg>
<div class="b" style="left:1408.1px;top:884.2px;width:77.9px;height:37.6px;border-radius:5px;background:#6a62db"></div>
<div class="t" style="left:462.21px;top:93.90px;font-size:30px;line-height:30px;font-weight:700;color:#1b2132;letter-spacing:0.746px;transform:scaleX(1.0444);transform-origin:0 0;">Number: 0130510</div>
<div class="t" style="left:466.40px;top:178.70px;font-size:15px;line-height:15px;font-weight:400;color:#1b2132;letter-spacing:0.434px;-webkit-text-stroke:0.4px #1b2132;transform:scaleX(1.0544);transform-origin:0 0;">Status</div>
<div class="t" style="left:646.00px;top:178.70px;font-size:15px;line-height:15px;font-weight:700;color:#2d801f;letter-spacing:0.178px;transform:scaleX(1.0204);transform-origin:0 0;">Active</div>
<div class="t" style="left:722.99px;top:179.60px;font-size:15px;line-height:15px;font-weight:400;color:#6b63dd;letter-spacing:0.069px;-webkit-text-stroke:0.4px #6b63dd;transform:scaleX(1.0067);transform-origin:0 0;">Lock</div>
<div class="t" style="left:466.50px;top:254.10px;font-size:15px;line-height:15px;font-weight:400;color:#1b2132;letter-spacing:0.461px;-webkit-text-stroke:0.4px #1b2132;transform:scaleX(1.0550);transform-origin:0 0;">Server</div>
<div class="t" style="left:465.44px;top:292.10px;font-size:15px;line-height:15px;font-weight:400;color:#1b2132;letter-spacing:0.475px;-webkit-text-stroke:0.4px #1b2132;transform:scaleX(1.0550);transform-origin:0 0;">Port</div>
<div class="t" style="left:465.44px;top:329.90px;font-size:15px;line-height:15px;font-weight:400;color:#1b2132;letter-spacing:0.721px;-webkit-text-stroke:0.4px #1b2132;transform:scaleX(1.0600);transform-origin:0 0;">Internal number</div>
<div class="t" style="left:653.00px;top:253.80px;font-size:15px;line-height:15px;font-weight:400;color:#1b2132;letter-spacing:0.398px;-webkit-text-stroke:0.4px #1b2132;transform:scaleX(1.0591);transform-origin:0 0;">voip.octella.com</div>
<div class="t" style="left:653.00px;top:292.00px;font-size:15px;line-height:15px;font-weight:400;color:#1b2132;letter-spacing:0.109px;-webkit-text-stroke:0.4px #1b2132;transform:scaleX(1.0100);transform-origin:0 0;">9060</div>
<div class="t" style="left:653.00px;top:329.90px;font-size:15px;line-height:15px;font-weight:400;color:#1b2132;letter-spacing:0.117px;-webkit-text-stroke:0.4px #1b2132;transform:scaleX(1.0100);transform-origin:0 0;">911</div>
<div class="t" style="left:997.74px;top:254.20px;font-size:15px;line-height:15px;font-weight:400;color:#1b2132;letter-spacing:0.712px;-webkit-text-stroke:0.4px #1b2132;transform:scaleX(1.0600);transform-origin:0 0;">Login</div>
<div class="t" style="left:997.76px;top:291.90px;font-size:15px;line-height:15px;font-weight:400;color:#1b2132;letter-spacing:0.336px;-webkit-text-stroke:0.4px #1b2132;transform:scaleX(1.0378);transform-origin:0 0;">Password</div>
<div class="t" style="left:1185.20px;top:253.80px;font-size:15px;line-height:15px;font-weight:400;color:#1b2132;letter-spacing:0.078px;-webkit-text-stroke:0.4px #1b2132;transform:scaleX(1.0082);transform-origin:0 0;">0130510</div>
<div class="t" style="left:1185.20px;top:291.60px;font-size:15px;line-height:15px;font-weight:400;color:#1b2132;letter-spacing:0.501px;-webkit-text-stroke:0.4px #1b2132;transform:scaleX(1.0561);transform-origin:0 0;">tgdh3nmyY_</div>
<div class="t" style="left:465.45px;top:413.00px;font-size:15px;line-height:15px;font-weight:400;color:#1b2132;letter-spacing:0.432px;-webkit-text-stroke:0.4px #1b2132;transform:scaleX(1.0485);transform-origin:0 0;">Employee</div>
<div class="t" style="left:466.50px;top:468.60px;font-size:15px;line-height:15px;font-weight:400;color:#1b2132;letter-spacing:0.285px;-webkit-text-stroke:0.4px #1b2132;transform:scaleX(1.0328);transform-origin:0 0;">Channels</div>
<div class="t" style="left:662.80px;top:412.30px;font-size:15px;line-height:15px;font-weight:400;color:#1b2132;letter-spacing:0.482px;-webkit-text-stroke:0.4px #1b2132;transform:scaleX(1.0550);transform-origin:0 0;">Anna Panna</div>
<div class="t" style="left:661.80px;top:467.80px;font-size:15px;line-height:15px;font-weight:400;color:#1b2132;letter-spacing:0.000px;-webkit-text-stroke:0.4px #1b2132;">1</div>
<div class="t" style="left:998.60px;top:413.20px;font-size:15px;line-height:15px;font-weight:400;color:#1b2132;letter-spacing:0.489px;-webkit-text-stroke:0.4px #1b2132;transform:scaleX(1.0599);transform-origin:0 0;">Communication</div>
<div class="t" style="left:998.60px;top:459.70px;font-size:15px;line-height:15px;font-weight:400;color:#1b2132;letter-spacing:0.428px;-webkit-text-stroke:0.4px #1b2132;transform:scaleX(1.0600);transform-origin:0 0;">Caller ID on outbound</div>
<div class="t" style="left:998.60px;top:477.20px;font-size:15px;line-height:15px;font-weight:400;color:#1b2132;letter-spacing:0.292px;-webkit-text-stroke:0.4px #1b2132;transform:scaleX(1.0412);transform-origin:0 0;">call</div>
<div class="t" style="left:997.54px;top:514.50px;font-size:15px;line-height:15px;font-weight:400;color:#1b2132;letter-spacing:0.630px;-webkit-text-stroke:0.4px #1b2132;transform:scaleX(1.0600);transform-origin:0 0;">Default outbound</div>
<div class="t" style="left:997.54px;top:533.30px;font-size:15px;line-height:15px;font-weight:400;color:#1b2132;letter-spacing:0.593px;-webkit-text-stroke:0.4px #1b2132;transform:scaleX(1.0600);transform-origin:0 0;">number</div>
<div class="t" style="left:1193.54px;top:412.00px;font-size:15px;line-height:15px;font-weight:400;color:#1b2132;letter-spacing:0.708px;-webkit-text-stroke:0.4px #1b2132;transform:scaleX(1.0600);transform-origin:0 0;">Inbound and outbound</div>
<div class="t" style="left:1193.54px;top:467.30px;font-size:15px;line-height:15px;font-weight:400;color:#1b2132;letter-spacing:0.359px;-webkit-text-stroke:0.4px #1b2132;transform:scaleX(1.0550);transform-origin:0 0;">Fixed for subscriber</div>
<div class="t" style="left:1193.54px;top:501.50px;font-size:15px;line-height:15px;font-weight:400;color:#1b2132;letter-spacing:0.461px;-webkit-text-stroke:0.4px #1b2132;transform:scaleX(1.0550);transform-origin:0 0;">Fixed</div>
<div class="t" style="left:1193.54px;top:530.00px;font-size:15px;line-height:15px;font-weight:400;color:#1b2132;letter-spacing:0.359px;-webkit-text-stroke:0.4px #1b2132;transform:scaleX(1.0550);transform-origin:0 0;">Fixed for subscriber</div>
<div class="t" style="left:1193.54px;top:558.20px;font-size:15px;line-height:15px;font-weight:400;color:#1b2132;letter-spacing:0.464px;-webkit-text-stroke:0.4px #1b2132;transform:scaleX(1.0600);transform-origin:0 0;">Local fixed for subscriber</div>
<div class="t" style="left:1193.54px;top:586.80px;font-size:15px;line-height:15px;font-weight:400;color:#1b2132;letter-spacing:0.424px;-webkit-text-stroke:0.4px #1b2132;transform:scaleX(1.0550);transform-origin:0 0;">Local random</div>
<div class="t" style="left:1193.54px;top:615.30px;font-size:15px;line-height:15px;font-weight:400;color:#1b2132;letter-spacing:0.576px;-webkit-text-stroke:0.4px #1b2132;transform:scaleX(1.0550);transform-origin:0 0;">Random</div>
<div class="t" style="left:464.10px;top:581.80px;font-size:15px;line-height:15px;font-weight:700;color:#1b2132;letter-spacing:0.229px;transform:scaleX(1.0322);transform-origin:0 0;">Active registrations</div>
<div class="t" style="left:478.40px;top:625.50px;font-size:13px;line-height:13px;font-weight:700;color:#1b2132;letter-spacing:0.369px;transform:scaleX(1.0499);transform-origin:0 0;">User Agent</div>
<div class="t" style="left:1017.90px;top:625.40px;font-size:13px;line-height:13px;font-weight:700;color:#1b2132;letter-spacing:0.426px;transform:scaleX(1.0350);transform-origin:0 0;">IP</div>
<div class="t" style="left:475.35px;top:674.70px;font-size:15px;line-height:15px;font-weight:400;color:#777;letter-spacing:0.408px;-webkit-text-stroke:0.4px #777;transform:scaleX(1.0539);transform-origin:0 0;">No records</div>
<div class="t" style="left:463.36px;top:725.80px;font-size:15px;line-height:15px;font-weight:700;color:#1b2132;letter-spacing:0.289px;transform:scaleX(1.0414);transform-origin:0 0;">Last registration</div>
<div class="t" style="left:478.40px;top:769.70px;font-size:13px;line-height:13px;font-weight:700;color:#1b2132;letter-spacing:0.369px;transform:scaleX(1.0499);transform-origin:0 0;">User Agent</div>
<div class="t" style="left:1017.30px;top:769.90px;font-size:13px;line-height:13px;font-weight:700;color:#1b2132;letter-spacing:0.426px;transform:scaleX(1.0350);transform-origin:0 0;">IP</div>
<div class="t" style="left:1253.90px;top:769.90px;font-size:13px;line-height:13px;font-weight:700;color:#1b2132;letter-spacing:0.967px;transform:scaleX(1.0600);transform-origin:0 0;">Date</div>
<div class="t" style="left:478.80px;top:822.60px;font-size:15px;line-height:15px;font-weight:400;color:#1b2132;letter-spacing:0.000px;-webkit-text-stroke:0.4px #1b2132;">-</div>
<div class="t" style="left:1017.30px;top:822.60px;font-size:15px;line-height:15px;font-weight:400;color:#1b2132;letter-spacing:0.000px;-webkit-text-stroke:0.4px #1b2132;">-</div>
<div class="t" style="left:1253.90px;top:822.60px;font-size:15px;line-height:15px;font-weight:400;color:#1b2132;letter-spacing:0.000px;-webkit-text-stroke:0.4px #1b2132;">-</div>
<div class="t" style="left:476.16px;top:896.50px;font-size:14px;line-height:14px;font-weight:400;color:#6b63dd;letter-spacing:0.297px;-webkit-text-stroke:0.4px #6b63dd;transform:scaleX(1.0405);transform-origin:0 0;">Previous</div>
<div class="t" style="left:933.50px;top:896.30px;font-size:14px;line-height:14px;font-weight:400;color:#6b63dd;letter-spacing:0.339px;-webkit-text-stroke:0.4px #6b63dd;transform:scaleX(1.0523);transform-origin:0 0;">Send data to E-mail</div>
<div class="t" style="left:1349.70px;top:896.50px;font-size:14px;line-height:14px;font-weight:400;color:#6b63dd;letter-spacing:0.198px;-webkit-text-stroke:0.4px #6b63dd;transform:scaleX(1.0234);transform-origin:0 0;">Cancel</div>
<div class="t" style="left:1427.60px;top:895.70px;font-size:16px;line-height:16px;font-weight:700;color:#fff;letter-spacing:0.314px;transform:scaleX(1.0258);transform-origin:0 0;">Save</div></div>
<div class="layer"><div class="b" style="left:1624.1px;top:909.9px;width:70px;height:40px;border-radius:6px;background:#50a5e8;overflow:hidden"><svg width="70" height="40" viewBox="1624.1 909.9 70 40" style="position:absolute;left:0;top:0"><circle cx="1652" cy="939" r="17" fill="#3f5899"/><path d="M1671.8 920.6Q1660 921.5 1651.5 931Q1648 935 1646 936L1644 940L1670 945Q1668 935 1671.8 920.6Z" fill="#fff" stroke="#3f5899" stroke-width="1"/><circle cx="1662.4" cy="930.2" r="2.4" fill="#3f5899"/></svg></div></div>
</body></html>
